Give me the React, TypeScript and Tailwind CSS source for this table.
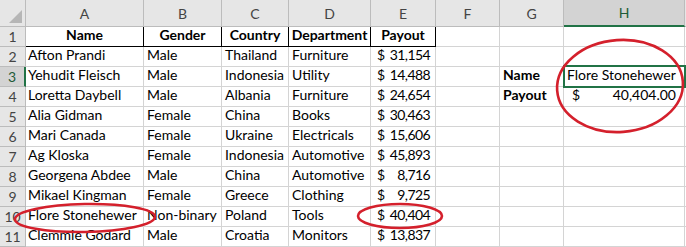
import React from "react";

const data: [string, string, string, string, string][] = [
  ["Afton Prandi", "Male", "Thailand", "Furniture", "31,154"],
  ["Yehudit Fleisch", "Male", "Indonesia", "Utility", "14,488"],
  ["Loretta Daybell", "Male", "Albania", "Furniture", "24,654"],
  ["Alia Gidman", "Female", "China", "Books", "30,463"],
  ["Mari Canada", "Female", "Ukraine", "Electricals", "15,606"],
  ["Ag Kloska", "Female", "Indonesia", "Automotive", "45,893"],
  ["Georgena Abdee", "Male", "China", "Automotive", "8,716"],
  ["Mikael Kingman", "Female", "Greece", "Clothing", "9,725"],
  ["Flore Stonehewer", "Non-binary", "Poland", "Tools", "40,404"],
  ["Clemmie Godard", "Male", "Croatia", "Monitors", "13,837"],
];

const cell =
  "border-r border-b border-[#d4d4d4] flex items-end pb-[1px] overflow-visible whitespace-nowrap bg-white";
const hdr =
  "border-r border-b border-[#bcbcbc] bg-[#e6e6e6] flex items-center justify-center text-[#444] whitespace-nowrap";

export default function App() {
  const cols = ["A", "B", "C", "D", "E", "F", "G", "H"];
  return (
    <div
      className="relative w-[686px] h-[247px] overflow-hidden bg-white text-[14px] text-black"
      style={{ fontFamily: "Lato, 'Liberation Sans', sans-serif" }}
    >
      <div className="grid grid-cols-[26px_118px_78px_67px_82px_65px_64px_64px_121px_1fr] grid-rows-[27px_repeat(11,20px)]">
        {/* corner */}
        <div className="relative border-r border-b border-[#bcbcbc] bg-[#e6e6e6]">
          <div className="absolute right-[3px] bottom-[3px] w-0 h-0 border-l-[13px] border-l-transparent border-b-[13px] border-b-[#b6b6b6]" />
        </div>
        {cols.map((c) =>
          c === "H" ? (
            <div
              key={c}
              className="border-r border-[#bcbcbc] border-b-2 border-b-[#217346] bg-[#d3d3d3] flex items-center justify-center text-[#1e5b38]"
            >
              {c}
            </div>
          ) : (
            <div key={c} className={hdr}>
              {c}
            </div>
          )
        )}
        <div className="border-b border-[#bcbcbc] bg-[#e6e6e6]" />

        {/* row 1 */}
        <div className={hdr}>1</div>
        {["Name", "Gender", "Country", "Department", "Payout"].map((h) => (
          <div
            key={h}
            className="border-r border-b border-black flex items-end justify-center pb-[1px] font-bold bg-white"
          >
            {h}
          </div>
        ))}
        <div className={cell} />
        <div className={cell} />
        <div className={cell} />
        <div className="border-b border-[#d4d4d4]" />

        {data.map((r, i) => {
          const n = i + 2;
          const selRow = n === 3;
          return (
            <React.Fragment key={n}>
              <div
                className={
                  selRow
                    ? "border-b border-[#bcbcbc] border-r-2 border-r-[#217346] bg-[#d3d3d3] flex items-center justify-center text-[#1e5b38]"
                    : hdr
                }
              >
                {n}
              </div>
              <div className={cell + " pl-[2px]"}>{r[0]}</div>
              <div className={cell + " pl-[3px]"}>{r[1]}</div>
              <div className={cell + " pl-[3px]"}>{r[2]}</div>
              <div className={cell + " pl-[3px]"}>{r[3]}</div>
              <div className={cell + " pl-[6px] pr-[5px] justify-between"}>
                <span>$</span>
                <span className="tracking-[-0.6px]">{r[4]}</span>
              </div>
              <div className={cell} />
              {n === 3 ? (
                <div className={cell + " pl-[3px] font-bold"}>Name</div>
              ) : n === 4 ? (
                <div className={cell + " pl-[3px] font-bold"}>Payout</div>
              ) : (
                <div className={cell} />
              )}
              {n === 3 ? (
                <div className="relative border-r border-b border-[#d4d4d4] flex items-end pb-[1px] pl-[3px] whitespace-nowrap bg-white">
                  <div className="absolute left-[-1px] top-[-2px] right-[-2px] bottom-[-2px] border-2 border-[#217346]" />
                  Flore Stonehewer
                </div>
              ) : n === 4 ? (
                <div className={cell + " pl-[8px] pr-[8px] justify-between"}>
                  <span>$</span>
                  <span>40,404.00</span>
                </div>
              ) : (
                <div className={cell} />
              )}
              <div className="border-b border-[#d4d4d4]" />
            </React.Fragment>
          );
        })}
      </div>

      <svg
        className="absolute inset-0 pointer-events-none"
        width="686"
        height="247"
        viewBox="0 0 686 247"
      >
        <g fill="none" stroke="#d4202c" strokeWidth="2.6">
          <ellipse cx="620" cy="86" rx="63" ry="46" transform="rotate(-4 620 86)" />
          <ellipse cx="85" cy="218" rx="70" ry="14" transform="rotate(-1 85 218)" />
          <ellipse cx="400" cy="216" rx="42" ry="12" />
        </g>
      </svg>
    </div>
  );
}
